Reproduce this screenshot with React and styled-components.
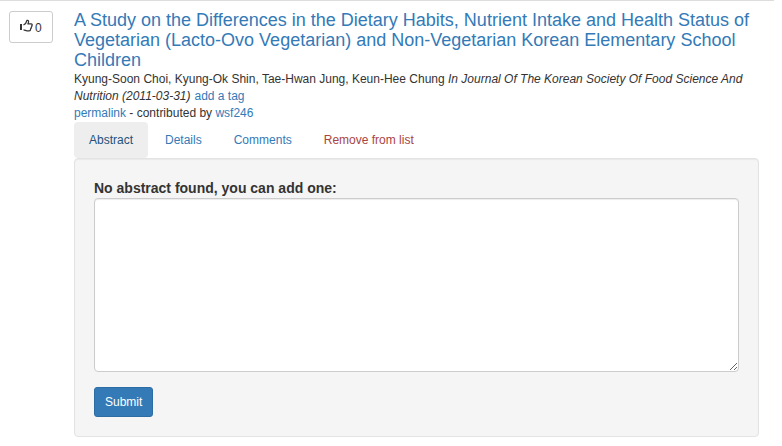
import React from "react";
import styled, { createGlobalStyle } from "styled-components";

const GlobalStyle = createGlobalStyle`
  *, *::before, *::after { box-sizing: border-box; }
  body {
    margin: 0;
    background: #fff;
    color: #333;
    font-family: "Liberation Sans", Arial, sans-serif;
    font-size: 12px;
    line-height: 17px;
  }
`;

const Entry = styled.article`
  display: flex;
  align-items: flex-start;
  width: 774px;
  height: 446px;
  padding: 9px 15px 0 9px;
  border-top: 1px solid #ddd;
`;

const VoteButton = styled.button`
  display: flex;
  align-items: flex-start;
  gap: 2px;
  flex: none;
  width: 44px;
  height: 32px;
  margin: 1px 21px 0 0;
  padding: 7px 0 0 9px;
  border: 1px solid #ccc;
  border-radius: 3px;
  background: #fff;
  color: #333;
  font: inherit;
`;

const ThumbIcon = styled.svg`
  flex: none;
  width: 14px;
  height: 13px;
`;

const Count = styled.span`
  padding-top: 1px;
`;

const Content = styled.div`
  flex: 1;
  min-width: 0;
`;

const Link = styled.a`
  color: #337ab7;
  text-decoration: none;
`;

const TagLink = styled(Link)`
  margin-left: 0.6px;
`;

const Title = styled.h4`
  margin: 0 0 1px;
  font-size: 18px;
  font-weight: 500;
  line-height: 20px;
`;

const Meta = styled.div``;

const Tabs = styled.nav`
  display: flex;
  gap: 2px;
`;

const Tab = styled.a`
  height: 36px;
  padding: 10px 15px 9px;
  border-radius: 4px;
  color: ${({ $active, $danger }) => ($danger ? "#a94442" : $active ? "#23527c" : "#337ab7")};
  background: ${({ $active }) => ($active ? "#eee" : "transparent")};
  text-decoration: none;
`;

const Well = styled.form`
  padding: 19px;
  border: 1px solid #e3e3e3;
  border-radius: 4px;
  background: #f5f5f5;
  box-shadow: inset 0 1px 1px rgba(0, 0, 0, 0.05);
`;

const Label = styled.label`
  display: block;
  font-size: 14px;
  font-weight: 700;
  line-height: 20px;
`;

const TextArea = styled.textarea`
  display: block;
  width: 100%;
  height: 174px;
  margin: 0 0 15px;
  padding: 6px 12px;
  border: 1px solid #ccc;
  border-radius: 4px;
  background: #fff;
  box-shadow: inset 0 1px 1px rgba(0, 0, 0, 0.075);
  resize: both;
  font: inherit;
`;

const SubmitButton = styled.button`
  display: block;
  height: 30px;
  padding: 5px 10px;
  border: 1px solid #2e6da4;
  border-radius: 3px;
  background: #337ab7;
  color: #fff;
  font: inherit;
  line-height: 18px;
`;

export default function App() {
  return (
    <>
      <GlobalStyle />
      <Entry>
        <VoteButton type="button" aria-label="Like, 0 votes">
          <ThumbIcon viewBox="0 0 14 13" fill="none" aria-hidden="true">
            <path d="M1 5h2v6H1z" fill="#333" />
            <path
              d="M4.5 6C6 5.2 7.5 3.7 7.7 1.9c.1-.9 1.8-.7 1.9.5.1.9-.3 1.6-.7 2.5h3.1c1.4 0 1.5 1.4.7 1.9.3.6.1 1.2-.5 1.5.2.8-.1 1.3-.6 1.6 0 1.2-.5 1.9-1.4 1.9H7.9c-1.2 0-2-.9-3.4-.9"
              stroke="#333"
              strokeWidth="1.25"
              strokeLinejoin="round"
            />
          </ThumbIcon>
          <Count>0</Count>
        </VoteButton>
        <Content>
          <Title>
            <Link>
              A Study on the Differences in the Dietary Habits, Nutrient Intake and Health Status of
              Vegetarian (Lacto-Ovo Vegetarian) and Non-Vegetarian Korean Elementary School Children
            </Link>
          </Title>
          <Meta>
            Kyung-Soon Choi, Kyung-Ok Shin, Tae-Hwan Jung, Keun-Hee Chung{" "}
            <em>In Journal Of The Korean Society Of Food Science And Nutrition (2011-03-31)</em>{" "}
            <TagLink>add a tag</TagLink>
          </Meta>
          <Meta>
            <Link>permalink</Link> - contributed by <Link>wsf246</Link>
          </Meta>
          <Tabs>
            <Tab $active>Abstract</Tab>
            <Tab>Details</Tab>
            <Tab>Comments</Tab>
            <Tab $danger>Remove from list</Tab>
          </Tabs>
          <Well>
            <Label htmlFor="abstract">No abstract found, you can add one:</Label>
            <TextArea id="abstract" />
            <SubmitButton type="button">Submit</SubmitButton>
          </Well>
        </Content>
      </Entry>
    </>
  );
}
